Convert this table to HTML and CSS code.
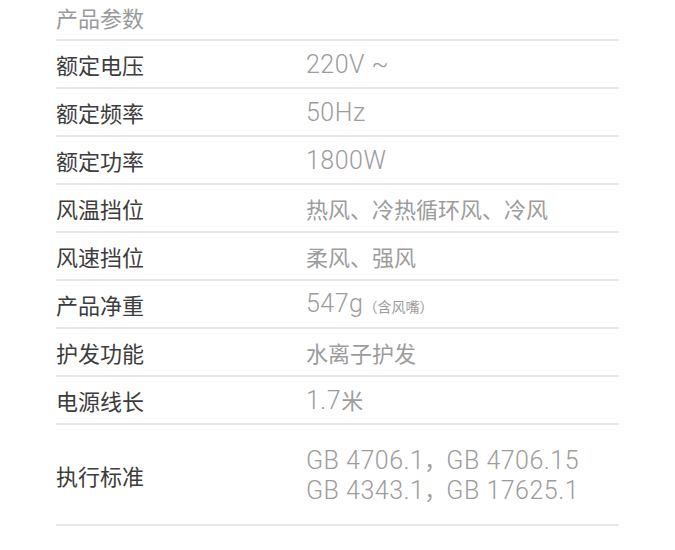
FILE: index.html
```html
<!DOCTYPE html>
<html lang="zh-CN">
<head>
  <meta charset="UTF-8" />
  <meta name="viewport" content="width=device-width, initial-scale=1.0"/>
  <title>产品参数</title>
  <link rel="stylesheet" href="styles.css">
</head>
<body>
  <div class="specs">
    <div class="title">产品参数</div>
    <div class="row"><div class="label">额定电压</div><div class="value"><span class="en">220V ~</span></div></div>
    <div class="row"><div class="label">额定频率</div><div class="value"><span class="en">50Hz</span></div></div>
    <div class="row"><div class="label">额定功率</div><div class="value"><span class="en">1800W</span></div></div>
    <div class="row"><div class="label">风温挡位</div><div class="value">热风、冷热循环风、冷风</div></div>
    <div class="row"><div class="label">风速挡位</div><div class="value">柔风、强风</div></div>
    <div class="row"><div class="label">产品净重</div><div class="value"><span class="en">547g</span><span class="note">（含风嘴）</span></div></div>
    <div class="row"><div class="label">护发功能</div><div class="value">水离子护发</div></div>
    <div class="row"><div class="label">电源线长</div><div class="value"><span class="en">1.7</span>米</div></div>
    <div class="row tall">
      <div class="label">执行标准</div>
      <div class="value">
        <div><span class="en">GB 4706.1</span>，<span class="en">GB 4706.15</span></div>
        <div><span class="en">GB 4343.1</span>，<span class="en">GB 17625.1</span></div>
      </div>
    </div>
  </div>
</body>
</html>
```

FILE: styles.css
```css
body { margin: 0; background: #fff; font-family: "Noto Sans CJK SC", sans-serif; }
.specs { width: 563px; margin-left: 56px; }
.title { height: 39px; line-height: 34px; font-size: 22px; color: #9a9a9a; }
.row { display: flex; align-items: center; height: 46px; border-top: 2px solid #e8e8e8; }
.row.tall { height: 99px; border-bottom: 2px solid #e8e8e8; }
.label { width: 250px; font-size: 22px; color: #3c3c3c; }
.value { font-size: 22px; color: #9c9c9c; line-height: 28px; }
.en { font-family: Roboto, "Noto Sans CJK SC", sans-serif; font-weight: 300; font-size: 25px; letter-spacing: 0.5px; }
.note { font-size: 14px; }
```
